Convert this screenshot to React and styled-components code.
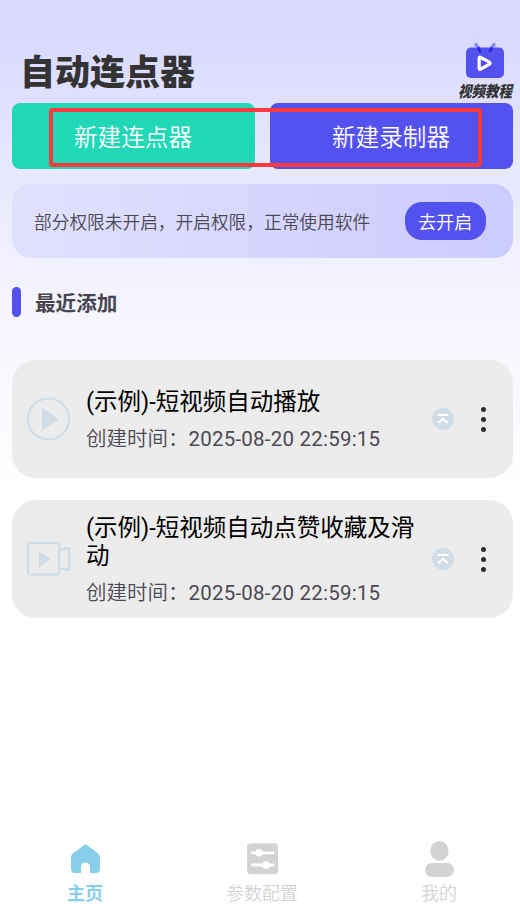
import React from 'react'
import styled, { createGlobalStyle } from 'styled-components'

const GlobalStyle = createGlobalStyle`
  * {
    box-sizing: border-box;
  }
  body {
    margin: 0;
    font-family: Roboto, "Noto Sans CJK SC", sans-serif;
    background: #fff;
  }
`

const Page = styled.div`
  display: flex;
  flex-direction: column;
  height: 907px;
  background: linear-gradient(180deg, #d7d7fe 0, #d9d9fe 35px, #e9e9fe 180px, #f5f5ff 310px, #fff 500px);
`

const Main = styled.main`
  flex: 1;
  padding: 41px 7px 0 12px;
`

const Header = styled.header`
  display: flex;
  justify-content: space-between;
  height: 62px;
`

const Title = styled.h1`
  margin: 9px 0 0 8px;
  font-size: 35px;
  line-height: 48px;
  font-weight: 900;
  color: #333;
`

const Tutorial = styled.div`
  display: flex;
  flex-direction: column;
  align-items: center;
  margin-right: 1px;
`

const TutorialText = styled.span`
  font-size: 13.5px;
  line-height: 20px;
  margin-top: 2px;
  font-weight: 900;
  font-style: italic;
  color: #333;
  transform: scaleY(1.15);
`

const Actions = styled.div`
  position: relative;
  display: flex;
  gap: 15px;
  height: 66px;
`

const ActionButton = styled.button`
  flex: 1;
  padding: 0 1px 1px 0;
  border: 0;
  border-radius: 8px;
  font-family: inherit;
  font-size: 23.6px;
  font-weight: 350;
  color: #fff;
  background: ${(props) => props.$color};
`

const Highlight = styled.div`
  position: absolute;
  top: 5px;
  left: 37px;
  width: 433px;
  height: 59px;
  border: 4px solid #fd3a3d;
  border-radius: 3px;
  pointer-events: none;
`

const Notice = styled.div`
  display: flex;
  align-items: center;
  justify-content: space-between;
  height: 74px;
  margin-top: 15px;
  padding: 0 27px 0 22px;
  border-radius: 19px;
  background: linear-gradient(90deg, #e1e1fe, #cccbfe);
`

const NoticeText = styled.span`
  font-size: 17.7px;
  font-weight: 350;
  color: #4b4953;
  white-space: nowrap;
`

const NoticeButton = styled.button`
  width: 81.5px;
  height: 38px;
  padding: 0 0 1px;
  border: 0;
  border-radius: 17px;
  font-family: inherit;
  font-size: 18px;
  font-weight: 350;
  color: #fff;
  background: #5452ee;
`

const SectionTitle = styled.h2`
  display: flex;
  align-items: center;
  gap: 14px;
  height: 30px;
  margin: 29px 0 43px;
  font-size: 20.6px;
  font-weight: 700;
  color: #47454f;
  &:before {
    content: '';
    width: 9px;
    height: 30px;
    border-radius: 4.5px;
    background: #5452ee;
  }
`

const Card = styled.article`
  display: flex;
  align-items: center;
  height: 118px;
  margin-bottom: 22.4px;
  padding: 0 27px 0 14px;
  border-radius: 24px;
  background: #ececec;
`

const CardBody = styled.div`
  flex: 1;
  margin-left: 15px;
  padding-top: 3px;
`

const CardTitle = styled.div`
  width: 334px;
  font-size: 23.5px;
  line-height: 28px;
  color: #000;
`

const CardTime = styled.div`
  margin-top: 9px;
  font-size: 20.5px;
  line-height: 28px;
  font-weight: 350;
  color: #4b4953;
`

const Time = styled.time`
  font-weight: 400;
  letter-spacing: 0.22px;
`

const Dots = styled.div`
  display: flex;
  flex-direction: column;
  gap: 5px;
  margin-left: 27px;
  span {
    width: 5px;
    height: 5px;
    border-radius: 50%;
    background: #2c2c2c;
  }
`

const TabBar = styled.nav`
  display: flex;
  justify-content: space-between;
  height: 67px;
  padding: 0 31px 0 35px;
`

const Tab = styled.div`
  display: flex;
  flex-direction: column;
  align-items: center;
  gap: 1px;
  width: 100px;
  font-size: 18px;
  line-height: 28px;
  font-weight: ${(props) => props.$active ? 700 : 350};
  color: ${(props) => props.$active ? '#87ceeb' : '#d3d3d3'};
`

const Icon = styled.svg`
  display: block;
  flex: none;
`

const TvIcon = () => (
  <Icon width='40' height='38' viewBox='0 0 40 38'>
    <rect x='1' y='6.5' width='38' height='30.5' rx='5' fill='#5452ee' />
    <path d='M11 3.6 L15 9.5' stroke='#8985f4' strokeWidth='3.4' strokeLinecap='round' />
    <path d='M29 3.6 L25 9.5' stroke='#8985f4' strokeWidth='3.4' strokeLinecap='round' />
    <path d='M13.5 7.5 L15.2 10 M26.5 7.5 L24.8 10' stroke='#2d25e5' strokeWidth='3.2' strokeLinecap='round' />
    <path d='M14.2 17.2 Q14.2 15.5 15.7 16.4 L24.4 21.2 Q25.8 22.2 24.4 23.1 L15.7 28.1 Q14.2 28.9 14.2 27.2 Z' fill='none' stroke='#fff' strokeWidth='3.2' strokeLinejoin='round' />
  </Icon>
)

const PlayIcon = () => (
  <Icon width='45' height='44' viewBox='0 0 45 44'>
    <circle cx='22.5' cy='22' r='20.6' fill='none' stroke='#d0dde7' strokeWidth='2' />
    <path d='M16.5 11.4 L32 22.3 L16.5 33 Z' fill='#d0dde7' stroke='#d0dde7' strokeWidth='1' strokeLinejoin='round' />
  </Icon>
)

const VideoIcon = () => (
  <Icon width='45' height='44' viewBox='0 0 45 44' fill='none' stroke='#d0dde7' strokeWidth='2.6' strokeLinejoin='round'>
    <rect x='2' y='6' width='31' height='31.5' rx='2.5' />
    <path d='M33 13.5 L40 11.2 Q43.2 10.3 43.2 13.5 V30.5 Q43.2 33.5 40 32.8 L33 31' />
    <path d='M13.5 14.8 L24 22.2 L13.5 29.6 Z' fill='#d0dde7' strokeWidth='1' />
  </Icon>
)

const TopIcon = () => (
  <Icon width='22' height='22' viewBox='0 0 22 22'>
    <circle cx='11' cy='11' r='11' fill='#d0dde7' />
    <path d='M5.6 7 H16.4 M6.3 15 L11 11 L15.7 15' fill='none' stroke='#fff' strokeWidth='2.1' />
  </Icon>
)

const HomeIcon = () => (
  <Icon width='36' height='39' viewBox='0 0 36 39'>
    <path d='M16.9 5.2 Q18.5 4 20.1 5.2 L30.7 13 Q33 14.7 33 17.5 V29 Q33 33 29 33 H23 V27 A4.5 4.5 0 0 0 14 27 V33 H8 Q4 33 4 29 V17.5 Q4 14.7 6.3 13 Z' fill='#87ceeb' />
  </Icon>
)

const ConfigIcon = () => (
  <Icon width='36' height='39' viewBox='0 0 36 39'>
    <rect x='3' y='3.3' width='31' height='31' rx='4' fill='#d3d3d3' />
    <path d='M8.4 12.8 H29.5 M8.4 25 H29.5' stroke='#fff' strokeWidth='2.8' strokeLinecap='round' />
    <circle cx='15' cy='12.8' r='3.8' fill='#fff' />
    <circle cx='22' cy='25' r='3.8' fill='#fff' />
  </Icon>
)

const UserIcon = () => (
  <Icon width='36' height='39' viewBox='0 0 36 39'>
    <ellipse cx='18.5' cy='11' rx='9.2' ry='10' fill='#d3d3d3' />
    <rect x='4' y='23' width='29' height='14' rx='7' fill='#d3d3d3' />
  </Icon>
)

const ScriptCard = ({ icon, title, time }) => (
  <Card>
    {icon}
    <CardBody>
      <CardTitle>{title}</CardTitle>
      <CardTime>创建时间：<Time>{time}</Time></CardTime>
    </CardBody>
    <TopIcon />
    <Dots>
      <span />
      <span />
      <span />
    </Dots>
  </Card>
)

const App = () => (
  <Page>
    <GlobalStyle />
    <Main>
      <Header>
        <Title>自动连点器</Title>
        <Tutorial>
          <TvIcon />
          <TutorialText>视频教程</TutorialText>
        </Tutorial>
      </Header>
      <Actions>
        <ActionButton $color='#20d8b5'>新建连点器</ActionButton>
        <ActionButton $color='#5452ee'>新建录制器</ActionButton>
        <Highlight />
      </Actions>
      <Notice>
        <NoticeText>部分权限未开启，开启权限，正常使用软件</NoticeText>
        <NoticeButton>去开启</NoticeButton>
      </Notice>
      <SectionTitle>最近添加</SectionTitle>
      <ScriptCard icon={<PlayIcon />} title='(示例)-短视频自动播放' time='2025-08-20 22:59:15' />
      <ScriptCard icon={<VideoIcon />} title='(示例)-短视频自动点赞收藏及滑动' time='2025-08-20 22:59:15' />
    </Main>
    <TabBar>
      <Tab $active>
        <HomeIcon />
        主页
      </Tab>
      <Tab>
        <ConfigIcon />
        参数配置
      </Tab>
      <Tab>
        <UserIcon />
        我的
      </Tab>
    </TabBar>
  </Page>
)

export default App
